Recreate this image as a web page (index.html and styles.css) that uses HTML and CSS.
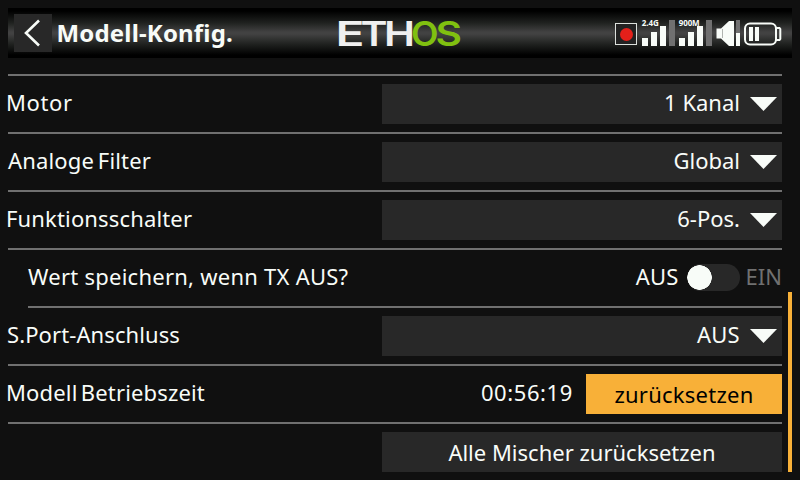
FILE: index.html
```html
<!DOCTYPE html>
<html lang="de">
<head>
<meta charset="utf-8">
<title>Modell-Konfig.</title>
<link rel="stylesheet" href="styles.css">
</head>
<body>
<header class="topbar">
  <button class="back" aria-label="Zurück">
    <svg width="38" height="38" viewBox="0 0 38 38"><path d="M25 6.500 12 19l13 12.500" fill="none" stroke="#f8fcf8" stroke-width="2.600"/></svg>
  </button>
  <h1 class="title">Modell-Konfig.</h1>
  <svg class="logo" width="126" height="50" viewBox="0 0 126 50">
    <g fill="#f0f0f0">
      <text x="-1.500" y="37.500" textLength="29" lengthAdjust="spacingAndGlyphs">E</text>
      <text x="23.500" y="37.500" textLength="27" lengthAdjust="spacingAndGlyphs">T</text>
      <text x="47" y="37.500" textLength="31" lengthAdjust="spacingAndGlyphs">H</text>
    </g>
    <g fill="#80c010">
      <text x="74" y="37.500" textLength="27.500" lengthAdjust="spacingAndGlyphs">O</text>
      <text x="98.500" y="37.500" textLength="26.500" lengthAdjust="spacingAndGlyphs">S</text>
    </g>
  </svg>
  <svg class="status" width="170" height="50" viewBox="614 8 170 50">
    <rect x="615.500" y="23.500" width="21" height="21" fill="#222" stroke="#dce0dc"/>
    <circle cx="626.500" cy="34.500" r="6.500" fill="#e4201a"/>
    <g fill="#f8fcf8">
      <path d="M642 38h6v8h-6zM651 32h6v14h-6zM660 26h6v20h-6z"/>
      <path d="M679 38h6v8h-6zM688 32h6v14h-6zM697 26h6v20h-6z"/>
      <path d="M716.500 28.500h4.500L729 21h5v25h-5l-8-7.500h-4.500z"/>
      <path d="M736 33h4v13h-4zM749 27h4v14h-4zM755 27h4v14h-4z"/>
      <text class="band" x="641.800" y="26">2.4G</text>
      <text class="band" x="678.700" y="26">900M</text>
    </g>
    <path d="M669 20h6v26h-6zM706 20h6v26h-6zM736 20h4v13h-4z" fill="#707070"/>
    <path d="M722.500 29v9" stroke="#b0b4b0"/>
    <g fill="none" stroke="#f8fcf8" stroke-width="2">
      <rect x="745" y="23.500" width="31" height="21" rx="5"/>
      <path d="M776 28h3.500l.8 1v10l-.8 1H776"/>
    </g>
  </svg>
</header>
<div class="content">
  <main class="form">
    <div class="row"><label class="label motor">Motor</label>
      <div class="select"><span>1 Kanal</span><i class="arrow"></i></div></div>
    <div class="row"><label class="label analog">Analoge Filter</label>
      <div class="select"><span>Global</span><i class="arrow"></i></div></div>
    <div class="row"><label class="label funktion">Funktionsschalter</label>
      <div class="select"><span>6-Pos.</span><i class="arrow"></i></div></div>
    <div class="row"><label class="label wert">Wert speichern, wenn TX AUS?</label>
      <div class="toggle"><span class="off">AUS</span><span class="switch"></span><span class="on">EIN</span></div></div>
    <div class="row indented"><label class="label sport">S.Port-Anschluss</label>
      <div class="select"><span class="wide">AUS</span><i class="arrow"></i></div></div>
    <div class="row"><label class="label zeit">Modell Betriebszeit</label>
      <div class="runtime"><span class="time">00:56:19</span><button class="reset">zurücksetzen</button></div></div>
    <div class="row"><span></span><button class="reset-all">Alle Mischer zurücksetzen</button></div>
  </main>
  <div class="scrollbar"></div>
</div>
</body>
</html>
```
FILE: styles.css
```css
* { box-sizing: border-box; }
body {
  margin: 0;
  width: 800px;
  height: 480px;
  overflow: hidden;
  padding: 8px 8px 0;
  background: #101010;
  color: #f8fcf8;
  font: 22px/36px "Noto Sans", sans-serif;
}
button { border: 0; padding: 0; color: inherit; font: inherit; }
span, label { white-space: nowrap; }
.topbar {
  display: flex;
  height: 50px;
  background: linear-gradient(#000 0, #000 6%, #202220 30%, #424242 48%, #424242 52%, #202220 72%, #000 94%, #000 100%);
}
.back { width: 38px; height: 38px; margin: 6px 0 0 6px; background: #282828; }
.back svg { display: block; }
.title { width: 180px; margin: 0 0 0 4.500px; font-size: 24px; line-height: 50px; font-weight: 700; white-space: nowrap; letter-spacing: .17px; }
.logo { margin-left: 100.500px; font: 600 34.500px Inter, sans-serif; }
.status { margin-left: auto; margin-right: 8px; }
.band { font: 700 8px "Noto Sans", sans-serif; letter-spacing: -.1px; }
.content { display: flex; justify-content: space-between; margin-top: 16px; height: 406px; }
.form { width: 774px; }
.row {
  display: flex;
  justify-content: space-between;
  height: 58px;
  padding-top: 8px;
  border-top: 2px solid #707070;
}
.indented { border-image: linear-gradient(90deg, #101010 20px, #707070 20px) 2 0 0 0; }
.motor { margin-left: -2px; letter-spacing: .6px; }
.analog { letter-spacing: .15px; word-spacing: -2px; }
.funktion { margin-left: -2px; letter-spacing: .15px; }
.wert { margin-left: 20px; letter-spacing: .25px; }
.sport { margin-left: -1px; letter-spacing: .1px; }
.zeit { margin-left: -2px; letter-spacing: .15px; word-spacing: -2.500px; }
.select {
  display: flex;
  justify-content: flex-end;
  width: 400px;
  height: 40px;
  padding-right: 5px;
  background: #282828;
}
.wide { letter-spacing: .3px; }
.arrow { width: 27px; height: 14px; margin: 13px 0 0 10px; background: #f8fcf8; clip-path: polygon(0 0, 100% 0, 50% 100%); }
.toggle { display: flex; height: 40px; }
.off { letter-spacing: .2px; }
.switch { width: 53px; height: 27px; margin: 6px 6px 0 8px; border-radius: 14px; background: radial-gradient(circle at 12.500px 13.500px, #f8fcf8 12px, #282828 12.500px); }
.on { color: #707070; }
.runtime { display: flex; }
.time { letter-spacing: .6px; }
.reset { width: 196px; height: 40px; margin-left: 13px; background: #f8b038; color: #000; line-height: 41px; letter-spacing: .25px; }
.reset-all { width: 400px; height: 40px; background: #282828; line-height: 40px; }
.scrollbar { width: 4px; height: 180px; margin-top: 218px; background: #f8b038; }
```
